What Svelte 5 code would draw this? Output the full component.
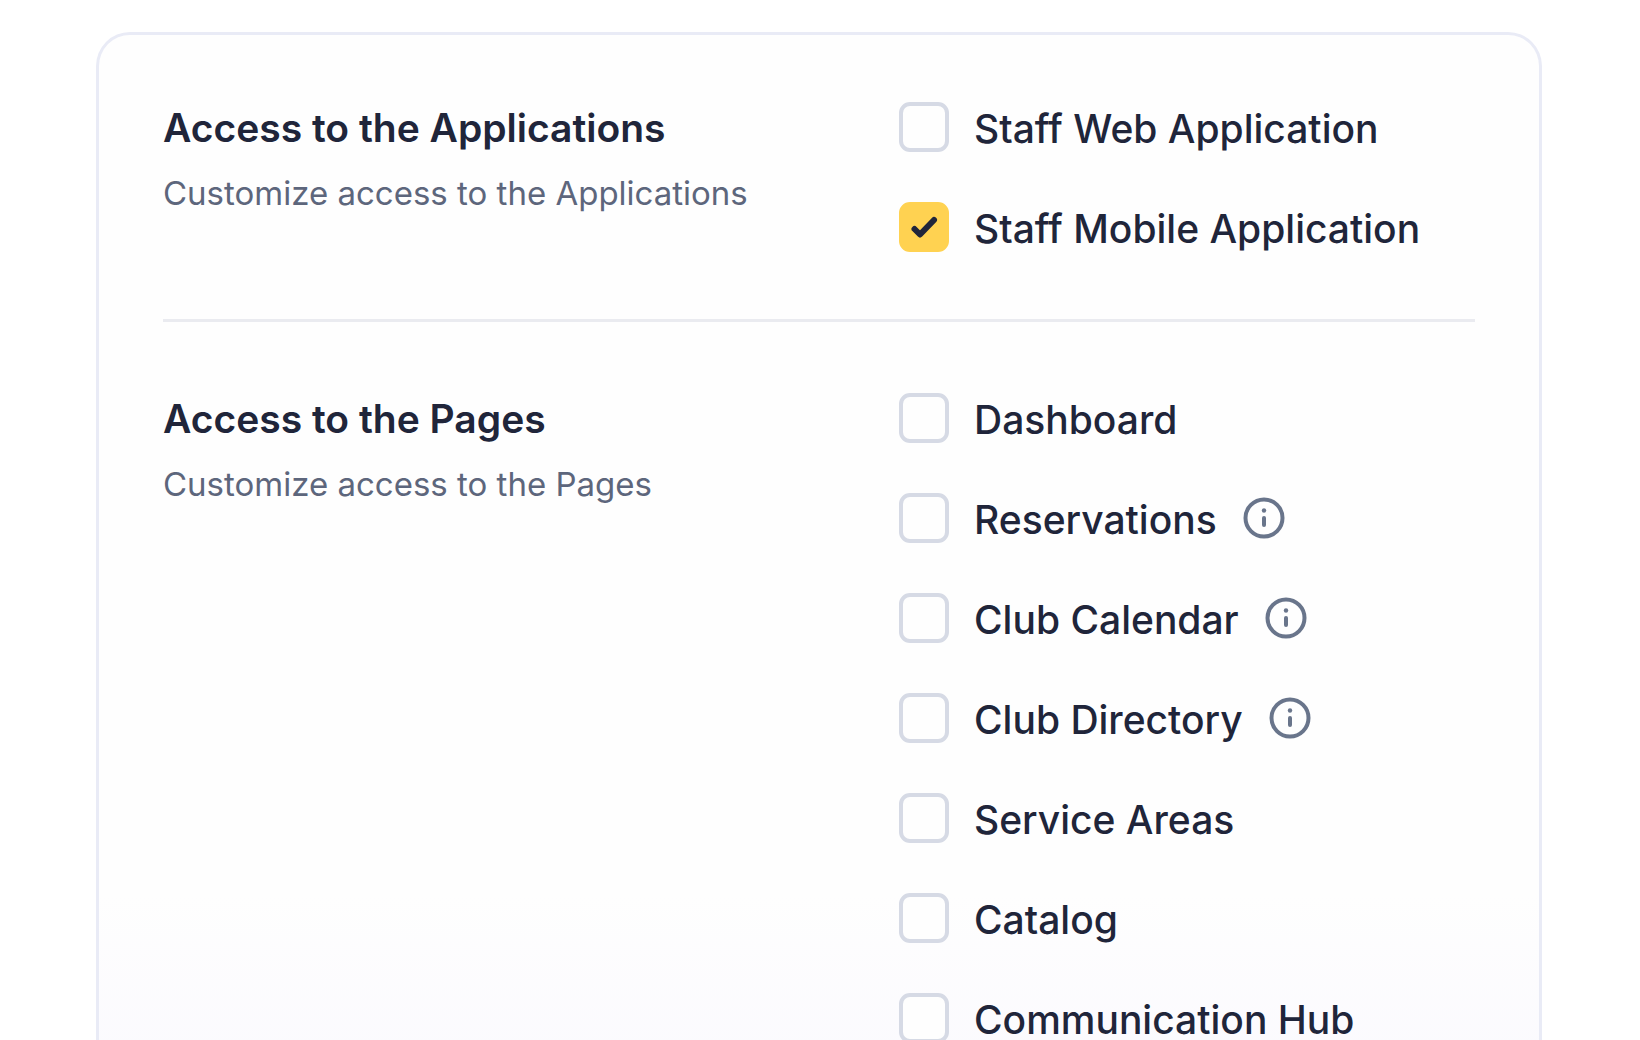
<script>
  const sections = [
    {
      title: 'Access to the Applications',
      hint: 'Customize access to the Applications',
      items: [
        { label: 'Staff Web Application' },
        { label: 'Staff Mobile Application', checked: true }
      ]
    },
    {
      title: 'Access to the Pages',
      hint: 'Customize access to the Pages',
      items: [
        { label: 'Dashboard' },
        { label: 'Reservations', info: true },
        { label: 'Club Calendar', info: true },
        { label: 'Club Directory', info: true },
        { label: 'Service Areas' },
        { label: 'Catalog' },
        { label: 'Communication Hub' }
      ]
    }
  ];
</script>

<main>
  <div class="card">
    {#each sections as section}
      <section>
        <div class="intro">
          <h2>{section.title}</h2>
          <p>{section.hint}</p>
        </div>
        <ul>
          {#each section.items as item}
            <li>
              <label>
                <span class="box">
                  <input type="checkbox" checked={item.checked} />
                  <svg class="tick" viewBox="0 0 50 50" aria-hidden="true"><path d="M15.500 27l5.500 5.500L35 18" /></svg>
                </span>
                <span class="text">{item.label}</span>
              </label>
              {#if item.info}
                <button type="button" aria-label="About {item.label}">
                  <svg viewBox="0 0 42 42" aria-hidden="true">
                    <circle class="ring" cx="21" cy="21" r="18.500" />
                    <path class="ring" d="M21 21v7" />
                    <circle class="dot" cx="21" cy="13.500" r="2.200" />
                  </svg>
                </button>
              {/if}
            </li>
          {/each}
        </ul>
      </section>
    {/each}
  </div>
</main>

<style>
  :global(body) {
    margin: 0;
    background: #fff;
  }
  main {
    box-sizing: border-box;
    height: 100vh;
    overflow: hidden;
    padding: 32px 98px 0 96px;
    font-family: Inter, "Noto Sans", sans-serif;
    color: #20253a;
  }
  .card {
    box-sizing: border-box;
    min-height: 100%;
    padding: 0 64px;
    border: 3px solid #e9ebf6;
    border-bottom: 0;
    border-radius: 34px 34px 0 0;
    background: linear-gradient(#fefefe 80%, #faf9fe);
  }
  section {
    display: grid;
    grid-template-columns: 23fr 18fr;
    padding: 67px 0;
  }
  section + section {
    border-top: 3px solid #eaebf0;
    padding-top: 71px;
  }
  h2 {
    margin: 0 0 13px;
    font-size: 39px;
    line-height: 52px;
    font-weight: 600;
  }
  p {
    margin: 0;
    font-size: 33px;
    line-height: 52px;
    color: #5d667c;
  }
  ul {
    display: grid;
    gap: 50px;
    margin: 0;
    padding: 0;
    list-style: none;
  }
  li, label {
    display: flex;
    align-items: center;
  }
  li {
    height: 50px;
    gap: 26px;
    white-space: nowrap;
  }
  label {
    gap: 25px;
  }
  .box {
    display: grid;
    width: 50px;
    height: 50px;
  }
  input, .tick {
    grid-area: 1 / 1;
    width: 50px;
    height: 50px;
  }
  input {
    appearance: none;
    box-sizing: border-box;
    margin: 0;
    border: 4px solid #d6dae5;
    border-radius: 11px;
    background: #fefefe;
  }
  input:checked {
    border-color: #ffd251;
    background: #ffd251;
  }
  .tick {
    display: none;
    fill: none;
    stroke: #20253a;
    stroke-width: 6;
    stroke-linecap: round;
    stroke-linejoin: round;
    pointer-events: none;
  }
  input:checked + .tick {
    display: block;
  }
  .text {
    font-size: 39px;
    line-height: 50px;
    font-weight: 500;
    padding-top: 4px;
  }
  button {
    width: 42px;
    height: 42px;
    padding: 0;
    border: 0;
    background: none;
  }
  button svg {
    display: block;
  }
  .ring {
    fill: none;
    stroke: #69758b;
    stroke-width: 4;
    stroke-linecap: round;
  }
  .dot {
    fill: #69758b;
  }
</style>
